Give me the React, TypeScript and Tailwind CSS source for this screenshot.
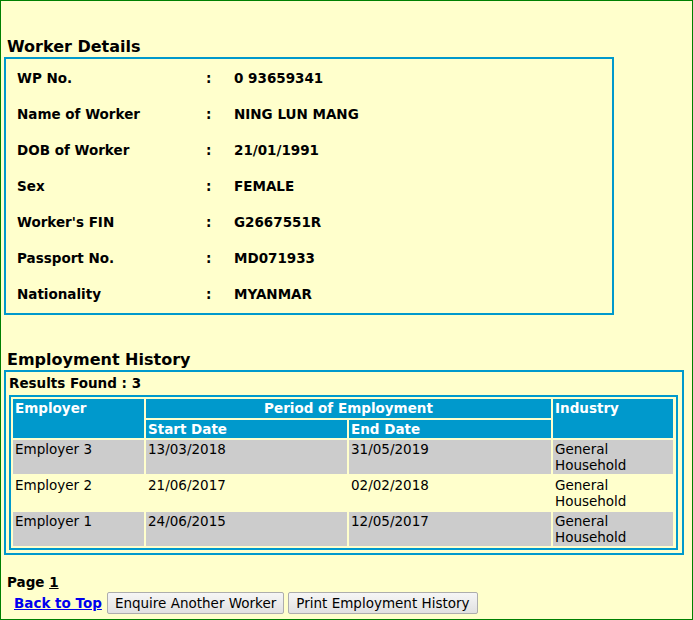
const WORKER = [
  ["WP No.", "0 93659341"],
  ["Name of Worker", "NING LUN MANG"],
  ["DOB of Worker", "21/01/1991"],
  ["Sex", "FEMALE"],
  ["Worker's FIN", "G2667551R"],
  ["Passport No.", "MD071933"],
  ["Nationality", "MYANMAR"],
];

const HISTORY = [
  { employer: "Employer 3", start: "13/03/2018", end: "31/05/2019", industry: "General Household" },
  { employer: "Employer 2", start: "21/06/2017", end: "02/02/2018", industry: "General Household" },
  { employer: "Employer 1", start: "24/06/2015", end: "12/05/2017", industry: "General Household" },
];

const cols = "grid grid-cols-[131px_201px_202px_120px] gap-[2px]";

export default function App() {
  return (
    <div className="w-[693px] h-[620px] bg-[#ffffcc] border border-[#008000] text-black font-['DejaVu_Sans',Verdana,sans-serif] text-[13.5px] overflow-hidden">
      <h3 className="mt-[36px] ml-[6px] text-[16px] font-bold leading-[20px]">Worker Details</h3>
      <div className="ml-[3px] w-[610px] border-2 border-[#0099cc] pt-[1px] pb-[1px]">
        {WORKER.map(([label, value]) => (
          <div key={label} className="grid grid-cols-[189px_28px_1fr] h-[36px] items-center pl-[11px] font-bold">
            <span>{label}</span>
            <span>:</span>
            <span>{value}</span>
          </div>
        ))}
      </div>

      <h3 className="mt-[35px] ml-[6px] text-[16px] font-bold leading-[20px]">Employment History</h3>
      <div className="ml-[3px] w-[680px] border-2 border-[#0099cc] px-[3px] pb-[3px]">
        <div className="font-bold leading-[16px] pt-[3px]">Results Found : 3</div>
        <div className="mt-[4px] mr-[1px] border-2 border-[#0099cc] p-[2px]">
          <div className="grid grid-cols-[131px_405px_120px] grid-rows-[19px_18px] gap-[2px] text-white font-bold leading-[16px]">
            <div className="row-span-2 bg-[#0099cc] px-[2px] pt-[1px]">Employer</div>
            <div className="bg-[#0099cc] text-center pt-[1px]">Period of Employment</div>
            <div className="row-span-2 bg-[#0099cc] px-[2px] pt-[1px]">Industry</div>
            <div className="grid grid-cols-[201px_202px] gap-[2px]">
              <div className="bg-[#0099cc] px-[2px] pt-[1px]">Start Date</div>
              <div className="bg-[#0099cc] px-[2px] pt-[1px]">End Date</div>
            </div>
          </div>
          {HISTORY.map((row, i) => {
            const bg = i % 2 === 0 ? "bg-[#cccccc]" : "bg-[#ffffcc]";
            return (
              <div key={row.employer} className={`${cols} mt-[2px] h-[34px] leading-[16px]`}>
                <div className={`${bg} px-[2px] pt-[1px]`}>{row.employer}</div>
                <div className={`${bg} px-[2px] pt-[1px]`}>{row.start}</div>
                <div className={`${bg} px-[2px] pt-[1px]`}>{row.end}</div>
                <div className={`${bg} px-[2px] pt-[1px]`}>
                  General
                  <br />
                  Household
                </div>
              </div>
            );
          })}
        </div>
      </div>

      <div className="mt-[19px] ml-[6px] font-bold leading-[16px]">
        Page <span className="underline">1</span>
      </div>
      <div className="mt-[2px] ml-[13px] flex items-center gap-[4px]">
        <a href="#" className="text-[#0000ee] font-bold underline mr-[1px]">Back to Top</a>
        <button className="h-[22px] px-[7px] border border-[#adadad] rounded-[2px] bg-gradient-to-b from-[#f6f6f6] to-[#e1e1e1] text-[13.5px] text-black leading-[16px]">
          Enquire Another Worker
        </button>
        <button className="h-[22px] px-[7px] border border-[#adadad] rounded-[2px] bg-gradient-to-b from-[#f6f6f6] to-[#e1e1e1] text-[13.5px] text-black leading-[16px]">
          Print Employment History
        </button>
      </div>
    </div>
  );
}
